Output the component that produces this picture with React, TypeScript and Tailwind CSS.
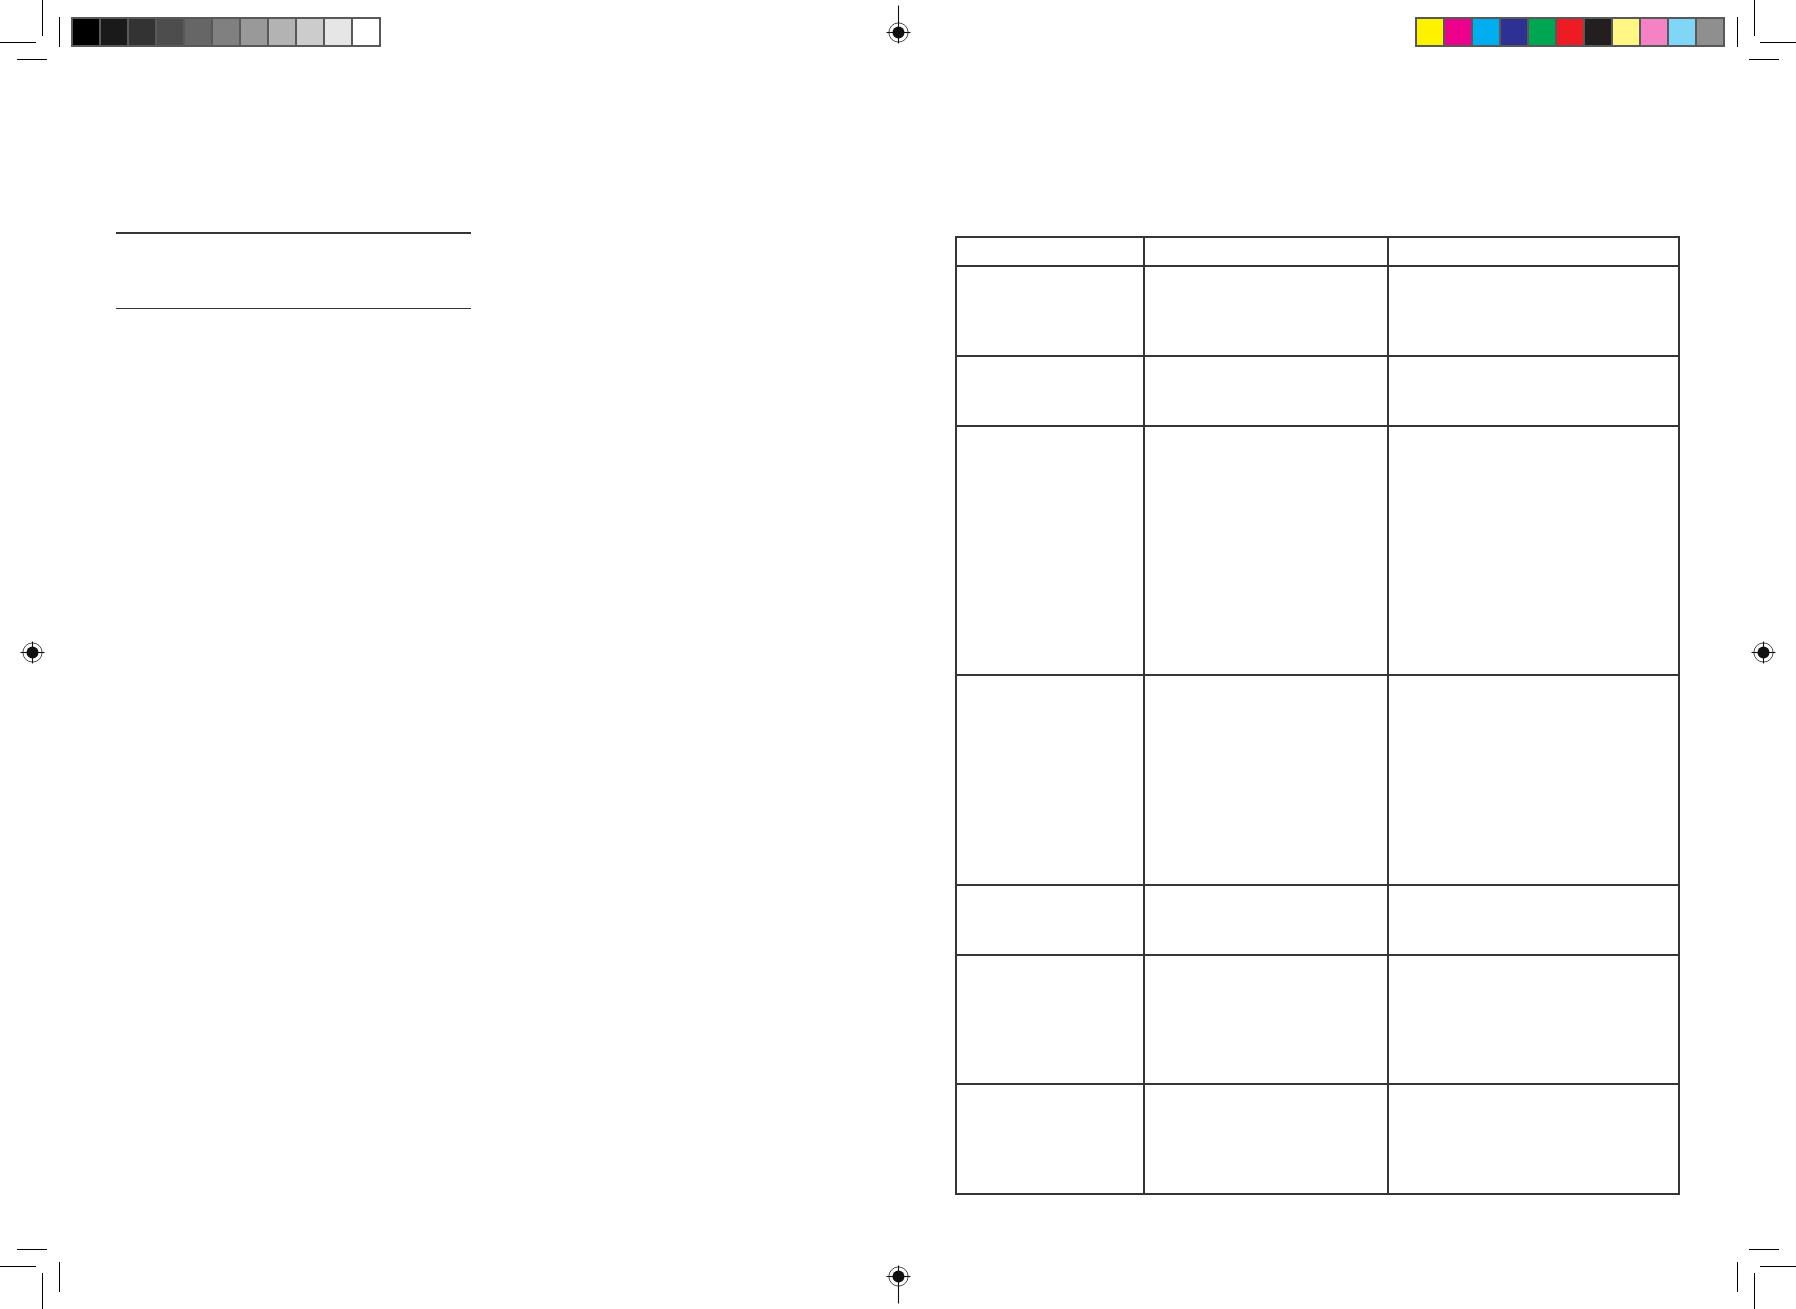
import React from "react";

const grays = ["#000000", "#1a1a1a", "#333333", "#4d4d4d", "#666666", "#808080", "#999999", "#b3b3b3", "#cccccc", "#e6e6e6", "#ffffff"];
const colors = ["#fff200", "#ec008c", "#00aeef", "#2e3192", "#00a651", "#ed1c24", "#231f20", "#fff685", "#f582c4", "#7fd6f7", "#8f8f8f"];

function Bar({ swatches }: { swatches: string[] }) {
  return (
    <div className="flex gap-[2px] p-[2px] bg-[#58595b]">
      {swatches.map((c, i) => (
        <div key={i} className="w-[26px] h-[26px]" style={{ background: c }} />
      ))}
    </div>
  );
}

type Reg = { x: number; y: number; up: number; down: number };

const regs: Reg[] = [
  { x: 898.5, y: 32.5, up: 27, down: 11 },
  { x: 898.5, y: 1276.5, up: 11, down: 27 },
  { x: 32.5, y: 652.5, up: 11, down: 11 },
  { x: 1763.5, y: 652.5, up: 11, down: 11 },
];

// crop mark segments: [x1, y1, x2, y2]
const crops: [number, number, number, number][] = [
  // top-left
  [42.5, 0, 42.5, 36],
  [0, 42.5, 36, 42.5],
  [59.5, 17, 59.5, 47],
  [17, 59.5, 47, 59.5],
  // top-right
  [1754.5, 0, 1754.5, 36],
  [1760, 42.5, 1796, 42.5],
  [1737.5, 17, 1737.5, 47],
  [1749, 59.5, 1779, 59.5],
  // bottom-left
  [42.5, 1273, 42.5, 1309],
  [0, 1266.5, 36, 1266.5],
  [59.5, 1262, 59.5, 1292],
  [17, 1249.5, 47, 1249.5],
  // bottom-right
  [1754.5, 1273, 1754.5, 1309],
  [1760, 1266.5, 1796, 1266.5],
  [1737.5, 1262, 1737.5, 1292],
  [1749, 1249.5, 1779, 1249.5],
];

function PrinterMarks() {
  return (
    <svg
      className="absolute inset-0 pointer-events-none"
      width={1796}
      height={1309}
      viewBox="0 0 1796 1309"
    >
      {crops.map(([x1, y1, x2, y2], i) => (
        <line key={i} x1={x1} y1={y1} x2={x2} y2={y2} stroke="#000" strokeWidth={1} />
      ))}
      {regs.map((r, i) => (
        <g key={i} transform={`translate(${r.x} ${r.y})`}>
          <circle cx={0} cy={0} r={9.6} fill="none" stroke="#231f20" strokeWidth={0.8} />
          <circle cx={0} cy={0} r={6} fill="#111" />
          <line x1={0} y1={-r.up} x2={0} y2={r.down} stroke="#111" strokeWidth={1.1} />
          <line x1={-12} y1={0} x2={12} y2={0} stroke="#111" strokeWidth={1.1} />
        </g>
      ))}
    </svg>
  );
}

const rows = [27, 90, 70, 249, 210, 70, 129, 110];

export default function App() {
  return (
    <div className="relative w-[1796px] h-[1309px] bg-white overflow-hidden font-['Liberation_Sans',sans-serif]">
      {/* color strip */}
      <div className="flex justify-between px-[71px] pt-[17px]">
        <Bar swatches={grays} />
        <Bar swatches={colors} />
      </div>

      {/* pages */}
      <div className="flex justify-between items-start px-[116px]">
        <div className="w-[355px] mt-[185px] flex flex-col">
          <div className="h-[2px] bg-[#373435]" />
          <div className="h-[74px]" />
          <div className="h-px bg-[#373435]" />
        </div>

        <div className="mt-[189px] w-[725px] border-2 border-[#373435] flex flex-col">
          {rows.map((h, i) => (
            <div
              key={i}
              className={`flex ${i > 0 ? "border-t-2 border-[#373435]" : ""}`}
              style={{ height: h }}
            >
              <div className="w-[186px]" />
              <div className="w-[244px] border-l-2 border-[#373435]" />
              <div className="w-[291px] border-l-2 border-[#373435]" />
            </div>
          ))}
        </div>
      </div>

      <PrinterMarks />
    </div>
  );
}
